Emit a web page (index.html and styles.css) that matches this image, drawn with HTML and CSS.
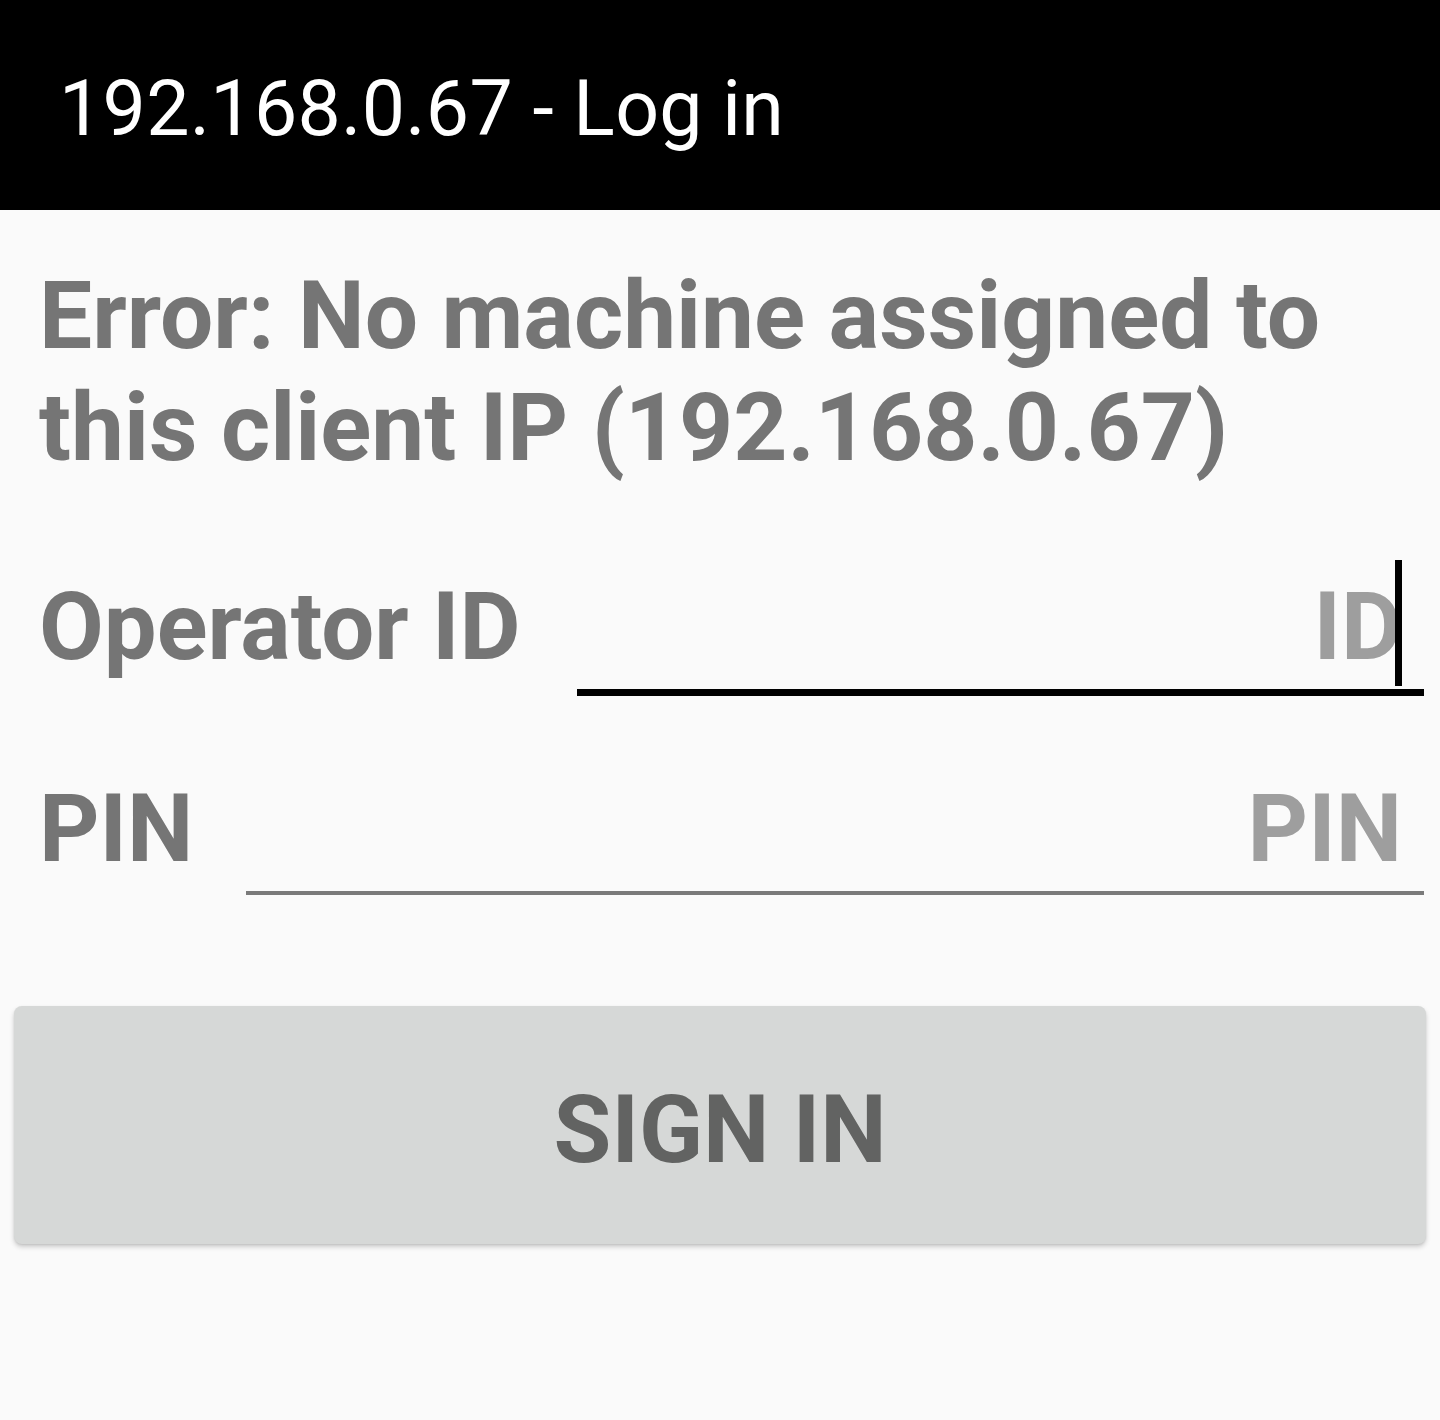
FILE: index.html
```html
<!DOCTYPE html>
<html lang="en">
<head>
<meta charset="utf-8">
<title>192.168.0.67 - Log in</title>
<link rel="stylesheet" href="styles.css">
</head>
<body>
<header class="toolbar">
  <h1 class="toolbar-title">192.168.0.67 - Log in</h1>
</header>
<main class="content">
  <p class="error">Error: No machine assigned to this client IP (192.168.0.67)</p>
  <div class="form-row row-operator">
    <label class="field-label">Operator ID</label>
    <div class="field field-focused"><span class="hint">ID</span><span class="cursor"></span></div>
  </div>
  <div class="form-row row-pin">
    <label class="field-label">PIN</label>
    <div class="field"><span class="hint">PIN</span></div>
  </div>
  <button class="sign-in" type="button">SIGN IN</button>
</main>
</body>
</html>
```

FILE: styles.css
```css
html, body {
  margin: 0;
  padding: 0;
}
body {
  background: #fafafa;
  font-family: Roboto, "Liberation Sans", sans-serif;
  width: 1440px;
  height: 1420px;
  overflow: hidden;
}
.toolbar {
  background: #000;
  height: 210px;
  box-sizing: border-box;
  padding: 64px 0 0 59px;
}
.toolbar-title {
  margin: 0;
  color: #fff;
  font-weight: 400;
  font-size: 77px;
  letter-spacing: 0.3px;
  line-height: normal;
}
.content {
  padding: 50px 16px 0 39px;
}
.error {
  margin: 0;
  color: #757575;
  font-weight: 700;
  font-size: 94.5px;
  line-height: 112px;
  width: 1340px;
}
.form-row {
  display: flex;
  align-items: baseline;
  font-size: 94px;
  line-height: 112px;
  font-weight: 700;
}
.row-operator {
  margin-top: 87px;
}
.row-pin {
  margin-top: 77px;
}
.field-label {
  color: #757575;
  margin-right: 56px;
}
.row-pin .field-label {
  margin-right: 53px;
}
.field {
  flex: 1;
  text-align: right;
  padding: 0 22px 6px 0;
  border-bottom: 4px solid #7a7a7a;
}
.field-focused {
  padding-bottom: 6px;
  border-bottom: 7px solid #000;
}
.hint {
  color: #9e9e9e;
}
.cursor {
  display: inline-block;
  width: 7px;
  height: 126px;
  background: #000;
  margin: -12px 0 -4px -7px;
  vertical-align: -23px;
}
.sign-in {
  display: block;
  box-sizing: border-box;
  margin: 111px 0 0 -25px;
  width: 1412px;
  height: 238px;
  padding: 68px 0 58px;
  border: none;
  border-radius: 8px;
  background: #d6d8d7;
  box-shadow: 0 3px 5px rgba(0, 0, 0, 0.18), 0 1px 2px rgba(0, 0, 0, 0.08);
  color: #626362;
  font-family: Roboto, "Liberation Sans", sans-serif;
  font-weight: 700;
  font-size: 94px;
  line-height: 112px;
  text-align: center;
}
```
